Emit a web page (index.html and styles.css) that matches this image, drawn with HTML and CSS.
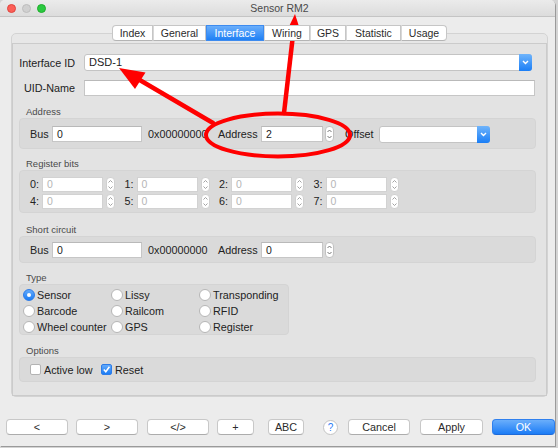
FILE: index.html
```html
<!DOCTYPE html>
<html lang="en">
<head>
    <meta charset="UTF-8">
    <meta name="viewport" content="width=device-width, initial-scale=1.0">
    <title>Sensor RM2</title>
    <link rel="stylesheet" href="styles.css">
</head>
<body>
    <div class="window">
        <div class="titlebar">
            <div class="lights">
                <span class="light red"></span>
                <span class="light grey"></span>
                <span class="light green"></span>
            </div>
            <div class="title">Sensor RM2</div>
            <div></div>
        </div>

        <div class="tabs">
            <div class="tab first" style="width:41px">Index</div>
            <div class="tab" style="width:53px">General</div>
            <div class="tab active" style="width:58px">Interface</div>
            <div class="tab" style="width:46px">Wiring</div>
            <div class="tab" style="width:36px">GPS</div>
            <div class="tab" style="width:55px">Statistic</div>
            <div class="tab last" style="width:46px">Usage</div>
        </div>

        <div class="tabframe">
            <div class="pane">
                <div class="row r-id">
                    <label>Interface ID</label>
                    <div class="combo grow">
                        <span class="combo-text">DSD-1</span>
                        <span class="combo-btn"><svg width="13" height="15" viewBox="0 0 13 15"><polyline points="4,6 6.5,8.5 9,6" fill="none" stroke="#fff" stroke-width="1.4"/></svg></span>
                    </div>
                </div>
                <div class="row r-uid">
                    <label>UID-Name</label>
                    <div class="field grow"></div>
                </div>

                <div class="group-title gt-address">Address</div>
                <div class="group g-address">
                    <span class="txt w16">Bus</span>
                    <div class="field w90">0</div>
                    <span class="txt hex">0x00000000</span>
                    <span class="txt w37">Address</span>
                    <div class="field w62">2</div>
                    <div class="spin"><svg width="7" height="14" viewBox="0 0 7 14"><polyline points="1.5,5 3.5,3 5.5,5" fill="none" stroke="#666" stroke-width="0.9"/><polyline points="1.5,9 3.5,11 5.5,9" fill="none" stroke="#666" stroke-width="0.9"/></svg></div>
                    <span class="txt w28 offset">Offset</span>
                    <div class="combo w111">
                        <span class="combo-text"></span>
                        <span class="combo-btn"><svg width="13" height="15" viewBox="0 0 13 15"><polyline points="4,6 6.5,8.5 9,6" fill="none" stroke="#fff" stroke-width="1.4"/></svg></span>
                    </div>
                </div>

                <div class="group-title gt-reg">Register bits</div>
                <div class="group g-reg">
                    <div class="bit"><span class="bit-lbl">0:</span><div class="field off">0</div><div class="spin small"><svg width="7" height="13" viewBox="0 0 7 13"><polyline points="1.5,4.5 3.5,2.5 5.5,4.5" fill="none" stroke="#999" stroke-width="0.9"/><polyline points="1.5,8.5 3.5,10.5 5.5,8.5" fill="none" stroke="#999" stroke-width="0.9"/></svg></div></div>
                    <div class="bit"><span class="bit-lbl">1:</span><div class="field off">0</div><div class="spin small"><svg width="7" height="13" viewBox="0 0 7 13"><polyline points="1.5,4.5 3.5,2.5 5.5,4.5" fill="none" stroke="#999" stroke-width="0.9"/><polyline points="1.5,8.5 3.5,10.5 5.5,8.5" fill="none" stroke="#999" stroke-width="0.9"/></svg></div></div>
                    <div class="bit"><span class="bit-lbl">2:</span><div class="field off">0</div><div class="spin small"><svg width="7" height="13" viewBox="0 0 7 13"><polyline points="1.5,4.5 3.5,2.5 5.5,4.5" fill="none" stroke="#999" stroke-width="0.9"/><polyline points="1.5,8.5 3.5,10.5 5.5,8.5" fill="none" stroke="#999" stroke-width="0.9"/></svg></div></div>
                    <div class="bit"><span class="bit-lbl">3:</span><div class="field off">0</div><div class="spin small"><svg width="7" height="13" viewBox="0 0 7 13"><polyline points="1.5,4.5 3.5,2.5 5.5,4.5" fill="none" stroke="#999" stroke-width="0.9"/><polyline points="1.5,8.5 3.5,10.5 5.5,8.5" fill="none" stroke="#999" stroke-width="0.9"/></svg></div></div>
                    <div class="bit"><span class="bit-lbl">4:</span><div class="field off">0</div><div class="spin small"><svg width="7" height="13" viewBox="0 0 7 13"><polyline points="1.5,4.5 3.5,2.5 5.5,4.5" fill="none" stroke="#999" stroke-width="0.9"/><polyline points="1.5,8.5 3.5,10.5 5.5,8.5" fill="none" stroke="#999" stroke-width="0.9"/></svg></div></div>
                    <div class="bit"><span class="bit-lbl">5:</span><div class="field off">0</div><div class="spin small"><svg width="7" height="13" viewBox="0 0 7 13"><polyline points="1.5,4.5 3.5,2.5 5.5,4.5" fill="none" stroke="#999" stroke-width="0.9"/><polyline points="1.5,8.5 3.5,10.5 5.5,8.5" fill="none" stroke="#999" stroke-width="0.9"/></svg></div></div>
                    <div class="bit"><span class="bit-lbl">6:</span><div class="field off">0</div><div class="spin small"><svg width="7" height="13" viewBox="0 0 7 13"><polyline points="1.5,4.5 3.5,2.5 5.5,4.5" fill="none" stroke="#999" stroke-width="0.9"/><polyline points="1.5,8.5 3.5,10.5 5.5,8.5" fill="none" stroke="#999" stroke-width="0.9"/></svg></div></div>
                    <div class="bit"><span class="bit-lbl">7:</span><div class="field off">0</div><div class="spin small"><svg width="7" height="13" viewBox="0 0 7 13"><polyline points="1.5,4.5 3.5,2.5 5.5,4.5" fill="none" stroke="#999" stroke-width="0.9"/><polyline points="1.5,8.5 3.5,10.5 5.5,8.5" fill="none" stroke="#999" stroke-width="0.9"/></svg></div></div>
                </div>

                <div class="group-title gt-short">Short circuit</div>
                <div class="group g-short">
                    <span class="txt w16">Bus</span>
                    <div class="field w90">0</div>
                    <span class="txt hex">0x00000000</span>
                    <span class="txt w37">Address</span>
                    <div class="field w62">0</div>
                    <div class="spin"><svg width="7" height="14" viewBox="0 0 7 14"><polyline points="1.5,5 3.5,3 5.5,5" fill="none" stroke="#666" stroke-width="0.9"/><polyline points="1.5,9 3.5,11 5.5,9" fill="none" stroke="#666" stroke-width="0.9"/></svg></div>
                </div>

                <div class="group-title gt-type">Type</div>
                <div class="group g-type">
                    <div class="opt"><span class="radio on"><span class="dot"></span></span>Sensor</div>
                    <div class="opt"><span class="radio"></span>Lissy</div>
                    <div class="opt"><span class="radio"></span>Transponding</div>
                    <div class="opt"><span class="radio"></span>Barcode</div>
                    <div class="opt"><span class="radio"></span>Railcom</div>
                    <div class="opt"><span class="radio"></span>RFID</div>
                    <div class="opt"><span class="radio"></span>Wheel counter</div>
                    <div class="opt"><span class="radio"></span>GPS</div>
                    <div class="opt"><span class="radio"></span>Register</div>
                </div>

                <div class="group-title gt-opt">Options</div>
                <div class="group g-opt">
                    <div class="check-item w71"><span class="check"></span>Active low</div>
                    <div class="check-item"><span class="check on"><svg width="9" height="9" viewBox="0 0 9 9"><polyline points="1.8,4.6 3.8,6.8 7.4,1.8" fill="none" stroke="#fff" stroke-width="1.5"/></svg></span>Reset</div>
                </div>
            </div>
        </div>

        <div class="buttons">
            <div class="btn w62">&lt;</div>
            <div class="btn w62 m8">&gt;</div>
            <div class="btn w62 m9">&lt;/&gt;</div>
            <div class="btn w37 m8">+</div>
            <div class="btn w36 m8">ABC</div>
            <div class="help">?</div>
            <div class="btn w62 m10">Cancel</div>
            <div class="btn w63 m10">Apply</div>
            <div class="btn w63 m9 default">OK</div>
        </div>
    </div>

    <svg class="marks" width="558" height="448" viewBox="0 0 558 448">
        <ellipse cx="278" cy="135" rx="72" ry="21.5" fill="none" stroke="#ff0000" stroke-width="4"/>
        <line x1="213" y1="123" x2="138" y2="79" stroke="#ff0000" stroke-width="4.5" stroke-linecap="round"/>
        <polygon points="119,68 145.5,72.5 135,89" fill="#ff0000"/>
        <line x1="284" y1="113" x2="293" y2="35" stroke="#ff0000" stroke-width="4.5" stroke-linecap="round"/>
        <polygon points="295,14 303,39 284,37" fill="#ff0000"/>
    </svg>
</body>
</html>
```

FILE: styles.css
```css
body {
    margin: 0;
    width: 558px;
    height: 448px;
    overflow: hidden;
    position: relative;
    background: #d4d4d4;
    font-family: "Liberation Sans", Arial, sans-serif;
    font-size: 10.5px;
    color: #222;
}

.window {
    width: 555px;
    height: 446px;
    background: #ececec;
    border-radius: 5px 5px 0 0;
    box-shadow: 1px 1px 0 #9a9a9a;
    overflow: hidden;
}

.titlebar {
    height: 17px;
    box-sizing: border-box;
    display: grid;
    grid-template-columns: 1fr auto 1fr;
    align-items: center;
    background: linear-gradient(#ebebeb, #dcdcdc);
    border-bottom: 1px solid #c4c4c4;
}

.lights {
    display: flex;
    gap: 6px;
    padding-left: 7px;
}

.light {
    width: 9px;
    height: 9px;
    border-radius: 50%;
    box-sizing: border-box;
}

.red { background: #fc5f57; border: 1px solid #df463f; }
.grey { background: #d0d0d0; border: 1px solid #bdbdbd; }
.green { background: #2ac940; border: 1px solid #1ead2c; }

.title {
    font-size: 10.5px;
    color: #4a4a4a;
    padding-left: 4px;
}

.tabs {
    display: flex;
    padding-left: 112px;
    margin-top: 8px;
    position: relative;
    z-index: 1;
}

.tab {
    height: 16px;
    box-sizing: border-box;
    background: #fff;
    border: 1px solid #c6c6c6;
    border-left: 1px solid #d8d8d8;
    border-bottom-color: #b4b4b4;
    font-size: 10.5px;
    line-height: 14px;
    text-align: center;
    color: #2b2b2b;
}

.tab.first {
    border-left-color: #c6c6c6;
    border-radius: 4px 0 0 4px;
}

.tab.last {
    border-radius: 0 4px 4px 0;
}

.tab.active {
    background: linear-gradient(#6aaefb, #1f80f5);
    border-color: #3d8bef;
    color: #fff;
}

.tabframe {
    margin: -8px 0 0 11px;
    width: 537px;
    height: 364px;
    box-sizing: border-box;
    border: 1px solid #d3d3d3;
    border-radius: 5px;
    background: #e7e7e7;
    padding-top: 9px;
}

.pane {
    height: 353px;
    box-sizing: border-box;
    border: 1px solid #cbcbcb;
    background: #e3e3e3;
    padding-top: 10px;
}

.row {
    display: flex;
    align-items: center;
}

.row label {
    flex: none;
    width: 62px;
    margin-right: 9px;
    text-align: right;
    font-size: 10.8px;
}

.r-id { margin-right: 14px; }
.r-uid { margin-top: 9px; margin-right: 11px; }

.field {
    flex: none;
    height: 16px;
    box-sizing: border-box;
    background: #fff;
    border: 1px solid #c6c6c6;
    border-top-color: #b9b9b9;
    padding: 0 4px;
    line-height: 14px;
}

.grow,
.field.grow {
    flex: 1;
}

.field.off {
    width: 61px;
    height: 15px;
    line-height: 13px;
    color: #b5b5b5;
    border-color: #d2d2d2;
}

.combo {
    display: flex;
    height: 17px;
    box-sizing: border-box;
    background: #fff;
    border: 1px solid #c4c4c4;
    border-radius: 3px;
}

.combo-text {
    flex: 1;
    padding-left: 4px;
    line-height: 15px;
    font-size: 11px;
}

.combo-btn {
    width: 13px;
    margin: -1px -1px -1px 0;
    border-radius: 0 3px 3px 0;
    background: linear-gradient(#6fb4fb, #1a7ef6);
    display: flex;
    align-items: center;
    justify-content: center;
}

.spin {
    flex: none;
    width: 9px;
    height: 16px;
    margin-left: 2px;
    box-sizing: border-box;
    border: 1px solid #c2c2c2;
    border-radius: 4px;
    background: #fff;
    display: flex;
    align-items: center;
    justify-content: center;
}

.spin svg { flex: none; }

.spin.small {
    height: 15px;
    margin-left: 3px;
    border-color: #d0d0d0;
}

.group-title {
    height: 12px;
    line-height: 12px;
    padding-left: 13px;
    font-size: 9.5px;
    color: #4a4a4a;
}

.group {
    margin: 0 10px 0 6px;
    box-sizing: border-box;
    border: 1px solid #d4d4d4;
    border-radius: 4px;
    background: #dadada;
}

.txt {
    flex: none;
    line-height: 16px;
    white-space: nowrap;
    font-size: 10.8px;
}

.w16 { width: 16px; margin-right: 6px; }
.w28 { width: 28px; margin-right: 6px; }
.w37 { width: 37px; margin-right: 6px; }
.hex { width: 60px; margin: 0 10px 0 6px; }
.offset { margin-left: 11px; }

.field.w90 { width: 90px; }
.field.w62 { width: 62px; }
.combo.w111 { width: 111px; flex: none; }

.gt-address { margin-top: 10px; }

.g-address {
    height: 31px;
    display: flex;
    align-items: flex-start;
    padding: 7px 0 0 10px;
}

.gt-reg { margin-top: 9px; }

.g-reg {
    height: 43px;
    padding: 6px 0 0 10px;
    display: grid;
    grid-template-columns: repeat(4, 85px);
    grid-auto-rows: 15px;
    column-gap: 9.5px;
    row-gap: 2px;
}

.bit {
    display: flex;
    align-items: center;
}

.bit-lbl {
    width: 12px;
    line-height: 15px;
    font-size: 10.8px;
}

.gt-short { margin-top: 11px; }

.g-short {
    height: 27px;
    display: flex;
    align-items: flex-start;
    padding: 5px 0 0 10px;
}

.gt-type { margin-top: 9px; }

.g-type {
    width: 270px;
    height: 51px;
    padding: 2px 0 0 3px;
    display: grid;
    grid-template-columns: repeat(3, 88px);
    grid-auto-rows: 16px;
}

.opt {
    display: flex;
    align-items: center;
    white-space: nowrap;
    font-size: 10.8px;
}

.radio {
    flex: none;
    width: 12px;
    height: 12px;
    margin-right: 2px;
    box-sizing: border-box;
    border: 1px solid #b6b6b6;
    border-radius: 50%;
    background: #fff;
}

.radio.on {
    background: linear-gradient(#64abfb, #1b7cf5);
    border-color: #2d7ce8;
    display: flex;
    align-items: center;
    justify-content: center;
}

.dot {
    width: 4px;
    height: 4px;
    border-radius: 50%;
    background: #fff;
}

.gt-opt { margin-top: 10px; }

.g-opt {
    height: 25px;
    display: flex;
    align-items: center;
    padding-left: 10px;
}

.check-item {
    display: flex;
    align-items: center;
    white-space: nowrap;
    font-size: 10.8px;
}

.check-item.w71 { width: 71px; }

.check {
    flex: none;
    width: 11px;
    height: 11px;
    margin-right: 3px;
    box-sizing: border-box;
    border: 1px solid #b3b3b3;
    border-radius: 2px;
    background: #fff;
}

.check.on {
    background: linear-gradient(#64abfb, #1b7cf5);
    border-color: #2d7ce8;
    display: flex;
    align-items: center;
    justify-content: center;
}

.buttons {
    display: flex;
    align-items: center;
    margin-top: 22px;
    padding-left: 6px;
}

.btn {
    flex: none;
    height: 16px;
    box-sizing: border-box;
    background: #fff;
    border: 1px solid #c8c8c8;
    border-bottom-color: #acacac;
    border-radius: 4px;
    font-size: 10.8px;
    line-height: 14px;
    text-align: center;
    color: #2b2b2b;
}

.btn.w62 { width: 62px; }
.btn.w63 { width: 63px; }
.btn.w37 { width: 37px; }
.btn.w36 { width: 36px; }
.m8 { margin-left: 8px; }
.m9 { margin-left: 9px; }
.m10 { margin-left: 10px; }

.btn.default {
    background: linear-gradient(#6aaefb, #1b7cf6);
    border-color: #2f80ee;
    border-bottom-color: #1d6ad8;
    color: #fff;
}

.help {
    flex: none;
    width: 15px;
    height: 15px;
    margin-left: 19px;
    box-sizing: border-box;
    border: 1px solid #c3c3c3;
    border-radius: 50%;
    background: #fff;
    color: #2a7df6;
    font-size: 10px;
    line-height: 13px;
    text-align: center;
}

.marks {
    position: absolute;
    top: 0;
    left: 0;
    pointer-events: none;
}
```
